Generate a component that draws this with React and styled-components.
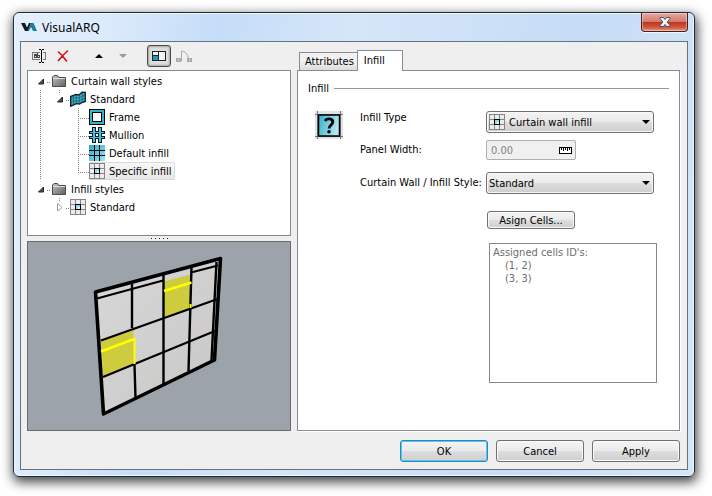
import React from "react";
import styled, { createGlobalStyle, css } from "styled-components";

const ui = `11px "DejaVu Sans Condensed", "DejaVu Sans", sans-serif`;

const GlobalStyle = createGlobalStyle`
  *, *::before, *::after { box-sizing: border-box; }
  body { margin: 0; background: #fff; font: ${ui}; color: #000; }
  button, input, select { font: inherit; color: inherit; margin: 0; }
  ul { list-style: none; margin: 0; padding: 0; }
  svg { display: block; flex: none; }
`;

const Page = styled.div`
  display: flow-root;
  padding: 12px 17px 19px 13px;
`;

const Dialog = styled.section`
  padding: 0 6px 6px;
  border: 1px solid #1f2b38;
  border-radius: 6px;
  background: linear-gradient(100deg, #e4effb 0, #dcebfb 12%, #c5ddf8 27%, #d5e6f8 45%, #c6dcf6 75%, #d4e6f8 100%);
  box-shadow: inset 0 0 0 1px #eef6fe, 1px 4px 12px 1px rgba(0, 0, 0, 0.75);
`;

const TitleBar = styled.header`
  display: flex;
  align-items: flex-start;
  height: 28px;
`;

const Title = styled.h1`
  display: flex;
  align-items: center;
  gap: 5px;
  flex: 1;
  height: 28px;
  margin: 0;
  padding-left: 1px;
  font: 12px "Noto Sans", sans-serif;
`;

const CloseButton = styled.button`
  display: grid;
  place-items: center;
  width: 47px;
  height: 19px;
  padding: 0;
  border: 1px solid #4d1a1a;
  border-top: 0;
  border-radius: 0 0 4px 4px;
  background: linear-gradient(#e6aaa0 0, #d6786c 48%, #bd3520 52%, #cf5a41 80%, #e09a80 100%);
  box-shadow: inset 0 0 0 1px rgba(255, 255, 255, 0.4), 0 1px 0 #f3f8fe;
`;

const Client = styled.div`
  padding: 0 7px 7px 6px;
  border: 1px solid #68727f;
  background: #efefef;
`;

const Columns = styled.main`
  display: grid;
  grid-template-columns: minmax(0, 264fr) minmax(0, 383fr);
  gap: 6px;
`;

const Column = styled.div`
  display: flex;
  flex-direction: column;
  min-width: 0;
`;

const Toolbar = styled.div`
  display: flex;
  align-items: center;
  height: 28px;
`;

const ToolButton = styled.button`
  display: grid;
  place-items: center;
  width: 24px;
  height: 22px;
  padding: 0;
  border: 1px solid transparent;
  border-radius: 3px;
  background: none;
  ${(p) => p.$pressed && css`
    border-color: #4b4b4b;
    background: #dedede;
    box-shadow: inset 0 0 2px 1px #a5a5a5;
  `}
`;

const ToolGap = styled.span`
  width: 12px;
`;

const Tree = styled.ul`
  height: 166px;
  padding: 1px 4px;
  overflow: hidden;
  border: 1px solid #828790;
  background: #fff;
`;

const Row = styled.div`
  display: flex;
  align-items: center;
  height: 18px;
`;

const dotsV = "repeating-linear-gradient(#808080 0 1px, transparent 1px 2px)";
const dotsH = "repeating-linear-gradient(90deg, #808080 0 1px, transparent 1px 2px)";
const guides = {
  none: "none",
  line: `${dotsV} 8px 0 / 1px 18px no-repeat`,
  tee: `${dotsV} 8px 0 / 1px 18px no-repeat, ${dotsH} 8px 10px / 11px 1px no-repeat`,
  end: `${dotsV} 8px 0 / 1px 10px no-repeat, ${dotsH} 8px 10px / 11px 1px no-repeat`,
  stub: `${dotsH} 15px 10px / 4px 1px no-repeat`,
  drop: `${dotsV} 8px 0 / 1px 3px no-repeat, ${dotsH} 15px 10px / 4px 1px no-repeat`,
};

const Guide = styled.span`
  display: flex;
  align-items: center;
  justify-content: center;
  flex: none;
  width: 19px;
  height: 18px;
  background: ${(p) => guides[p.$kind]};
`;

const Item = styled.span`
  display: flex;
  align-items: center;
  height: 18px;
  gap: 4px;
  padding-right: 4px;
  white-space: nowrap;
  border-radius: 2px;
  ${(p) => p.$selected && css`
    background: linear-gradient(#f9f9f9, #e6e6e6);
    box-shadow: inset 0 0 0 1px #d9d9d9;
  `}
`;

const Splitter = styled.div`
  display: flex;
  justify-content: center;
  gap: 3px;
  height: 5px;
  padding-top: 2px;
`;

const Grip = styled.span`
  width: 1px;
  height: 1px;
  background: #222;
`;

const Preview = styled.div`
  display: flex;
  justify-content: center;
  height: 190px;
  border: 1px solid #6b6b6b;
  background: #9ca3ab;
`;

const Tabs = styled.div`
  display: flex;
  align-items: flex-end;
  height: 28px;
  padding-left: 2px;
`;

const Tab = styled.button`
  height: ${(p) => (p.$active ? 21 : 18)}px;
  padding: ${(p) => (p.$active ? "0 17px 2px 6px" : "0 3px 0 5px")};
  border: 1px solid #898c95;
  border-bottom: 0;
  border-right-width: ${(p) => (p.$active ? 1 : 0)}px;
  background: ${(p) => (p.$active ? "#fff" : "linear-gradient(#f2f2f2 45%, #dcdcdc)")};
  margin-bottom: ${(p) => (p.$active ? -1 : 0)}px;
  z-index: ${(p) => (p.$active ? 1 : 0)};
`;

const Panel = styled.div`
  flex: 1;
  padding: 9px 10px 0;
  border: 1px solid #898c95;
  background: #fff;
  box-shadow: 1px 1px 0 #fff;
`;

const GroupTitle = styled.h2`
  display: flex;
  align-items: center;
  gap: 5px;
  height: 16px;
  margin: 0 0 14px;
  font: inherit;
  &::after {
    content: "";
    flex: 1;
    height: 1px;
    background: #999;
  }
`;

const Form = styled.form`
  display: grid;
  grid-template-columns: 45px 126px minmax(0, 1fr);
  grid-template-rows: 24px 32px 34px;
  align-items: center;
  padding: 0 15px 0 7px;
`;

const FormIcon = styled.div`
  grid-row: 1 / 4;
  align-self: start;
  padding-top: 1px;
`;

const Label = styled.label`
  grid-column: 2;
  align-self: ${(p) => (p.$top ? "start" : "center")};
  line-height: 16px;
  white-space: nowrap;
`;

const Combo = styled.div`
  display: grid;
  align-items: center;
  grid-template-columns: 3px 16px 1fr 8px 4px;
  height: 22px;
  > select, > svg { grid-row: 1; }
  > svg { z-index: 1; pointer-events: none; }
  > svg:nth-of-type(1) { grid-column: 2; }
  > svg:last-child { grid-column: 4; }
`;

const face = "linear-gradient(#f3f3f3 0, #ebebeb 48%, #dddddd 52%, #cfcfcf 100%)";

const Select = styled.select`
  grid-column: 1 / -1;
  width: 100%;
  height: 22px;
  padding: 0 20px 0 ${(p) => (p.$icon ? 22 : 2)}px;
  appearance: none;
  border: 1px solid #707070;
  border-radius: 3px;
  background: ${face};
  box-shadow: inset 0 0 0 1px #f8f8f8;
`;

const Measure = styled.div`
  display: flex;
  align-items: center;
  width: 90px;
  height: 20px;
  padding: 0 3px 0 4px;
  border: 1px solid #b0b0b0;
  border-radius: 2px;
  background: #f0f0f0;
  color: #838383;
`;

const MeasureInput = styled.input`
  flex: 1;
  min-width: 0;
  padding: 0;
  border: 0;
  background: none;
`;

const Button = styled.button`
  width: 88px;
  height: ${(p) => (p.$small ? 18 : 22)}px;
  padding: 0;
  border: 1px solid ${(p) => (p.$primary ? "#3c7fb1" : "#707070")};
  border-radius: 3px;
  background: ${face};
  box-shadow: inset 0 0 0 1px ${(p) => (p.$primary ? "#45d0fa" : "#fafafa")};
`;

const Assigned = styled.div`
  grid-column: 3;
  display: flex;
  flex-direction: column;
  gap: 14px;
  padding-top: 11px;
  margin: 0 -3px 0 1px;
`;

const CellList = styled.div`
  height: 140px;
  margin-left: 2px;
  padding: 2px 3px;
  border: 1px solid #828790;
  color: #6d6d6d;
  line-height: 13px;
`;

const CellItems = styled.ul`
  && { padding-left: 12px; }
`;

const Actions = styled.footer`
  display: flex;
  justify-content: flex-end;
  gap: 8px;
  padding-top: 9px;
`;

const Logo = () => (
  <svg width="16" height="16" viewBox="0 0 16 16">
    <path d="M0 4h4l2 4.500L8 4h2L7 12H4z" fill="#101820" />
    <path d="M10 4h2.500L16 12h-4l-2-4-2 4H6.500z" fill="#16809b" />
  </svg>
);

const Cross = () => (
  <svg width="12" height="10" viewBox="0 0 12 10">
    <path d="M1 .5h3.500L6 2.500 7.500.5H11v1L8.200 5 11 8.500v1H7.500L6 7.500l-1.500 2H1v-1L3.800 5 1 1.500z" fill="#f4f4f4" stroke="#4b4f63" />
  </svg>
);

const RenameIcon = () => (
  <svg width="16" height="16" viewBox="0 0 16 16" fill="none" stroke="#444" shapeRendering="crispEdges">
    <path d="M9 4.500H1.500v7H9M12 4.500h2.500v7H12" stroke="#777" />
    <path d="M3 6.500h2v3H3v-2h2M6.500 5v5M7 7.500h1.500v2H7" />
    <path d="M8 1.500h2M11 1.500h2M10.500 2v12M8 14.500h2M11 14.500h2" stroke="#000" />
  </svg>
);

const DeleteIcon = () => (
  <svg width="12" height="12" viewBox="0 0 12 12">
    <path d="M1.500 2C4 4 7 7.500 9.500 11M10.500 1C7 4 4 7 1.500 10.500" stroke="#d01010" strokeWidth="1.600" fill="none" strokeLinecap="round" />
  </svg>
);

const Arrow = ({ down, color = "#000" }) => (
  <svg width="8" height="4" viewBox="0 0 8 4">
    <path d={down ? "M0 0h8L4 4z" : "M0 4h8L4 0z"} fill={color} />
  </svg>
);

const LayoutIcon = () => (
  <svg width="14" height="10" viewBox="0 0 14 10" shapeRendering="crispEdges">
    <path d="M.5.5h13v9H.5z" fill="#f4f4f4" stroke="#222" />
    <path d="M1 5h5v4H1z" fill="#18a0c4" />
    <path d="M6.500 1v8M1 4.500h5" stroke="#222" />
  </svg>
);

const PathIcon = () => (
  <svg width="18" height="13" viewBox="-2 0 18 13" fill="none" stroke="#aaa">
    <path d="M5.500 11.500v-11M5.500 1.500C9 1 12 4 12.500 9" />
    <path d="M0 8h5v4H0zM11 8h5v4h-5z" fill="#aaa" stroke="none" />
    <path d="M2 10h1M13 10h1" stroke="#fff" />
  </svg>
);

const Expander = ({ open }) => (
  <svg width="7" height="8" viewBox="0 0 7 8">
    {open ? <path d="M5.500 2v5h-5z" fill="#555" stroke="#222" /> : <path d="M.5.5v8L5 4.500z" fill="#fff" stroke="#999" />}
  </svg>
);

const FolderIcon = () => (
  <svg width="16" height="16" viewBox="0 0 16 16">
    <defs>
      <linearGradient id="folder" x2="1" y2="1">
        <stop stopColor="#c4c4c4" />
        <stop offset="1" stopColor="#606060" />
      </linearGradient>
    </defs>
    <path d="M1.500 13.500v-9.500L3 2.500h3.500L8 4.500h6.500v9z" fill="url(#folder)" stroke="#4c4c4c" />
    <path d="M2 5.500h12" stroke="#ddd" />
  </svg>
);

const WallIcon = () => (
  <svg width="16" height="16" viewBox="0 0 16 16">
    <path d="M.7 5.500 6 3.500l3 .5 3-2.800 3.300.3v9L12 11.500 9.500 13l-3-.5L.7 15.200z" fill="#3fb0c6" stroke="#12262c" strokeWidth="1.400" />
    <path d="M3.500 4.500v9M6.300 4v8.500M9.300 4v8.500M12.300 2v9.500M1 8.500l5-2 3.300.5L12 5l3-.5M1 11.500l5-2 3.300.5L12 8l3-.5" stroke="#185663" strokeWidth=".7" fill="none" />
  </svg>
);

const FrameIcon = () => (
  <svg width="16" height="16" viewBox="0 0 16 16" shapeRendering="crispEdges">
    <path d="M.5.5h15v15H.5z" fill="#35b4d0" stroke="#000" />
    <path d="M3.500 3.500h9v9h-9z" fill="#fff" stroke="#000" />
  </svg>
);

const MullionIcon = () => (
  <svg width="16" height="16" viewBox="0 0 16 16" shapeRendering="crispEdges">
    <path d="M3 0h4v16H3zM9 0h4v16H9zM0 4h16v3H0zM0 9h16v3H0z" fill="#0b1a1e" />
    <path d="M4 1h2v14H4zM10 1h2v14h-2zM1 5h14v1H1zM1 10h14v1H1z" fill="#4cc0d8" />
    <path d="M7 7h2v2H7z" fill="#fff" />
  </svg>
);

const GridIcon = () => (
  <svg width="16" height="16" viewBox="0 0 16 16" shapeRendering="crispEdges">
    <defs>
      <linearGradient id="pane" x2="1" y2="1">
        <stop stopColor="#27a8cc" />
        <stop offset="1" stopColor="#a5e6f2" />
      </linearGradient>
    </defs>
    <path d="M0 0h16v16H0z" fill="url(#pane)" />
    <path d="M5.500 0v16M10.500 0v16M0 5.500h16M0 10.500h16" stroke="#000" />
  </svg>
);

const CellIcon = () => (
  <svg width="16" height="16" viewBox="0 0 16 16" shapeRendering="crispEdges">
    <path d="M.5.5h15v15H.5z" fill="#ececec" stroke="#858585" />
    <path d="M5.500 0v16M10.500 0v16M0 5.500h16M0 10.500h16" stroke="#858585" />
    <path d="M5.500 5.500h5v5h-5z" fill="#8bdcec" stroke="#000" />
    <path d="M8 8h2v2H8z" fill="#d8f5fa" />
  </svg>
);

const InfillIcon = () => (
  <svg width="28" height="28" viewBox="0 0 28 28">
    <defs>
      <linearGradient id="glass" x2="1" y2="0.300">
        <stop stopColor="#32aecb" />
        <stop offset="1" stopColor="#b4e9f3" />
      </linearGradient>
    </defs>
    <path d="M0 0h28v28H0z" fill="#e2e2e2" />
    <path d="M2.500 0v28M25.500 0v28M0 3.500h28M0 25.500h28" stroke="#777" />
    <path d="M3.500 4h21v21h-21z" fill="url(#glass)" stroke="#000" strokeWidth="1.500" />
    <path d="M10 10c1.500-3 7.800-3 7.800 1 0 3-3.800 3-3.800 6.500" fill="none" stroke="#000" strokeWidth="2.800" />
    <circle cx="14" cy="20.800" r="1.800" />
  </svg>
);

const RulerIcon = () => (
  <svg width="13" height="7" viewBox="0 0 13 7" shapeRendering="crispEdges">
    <path d="M.5.5h12v6H.5z" fill="#fff" stroke="#000" />
    <path d="M2.500 1v2M4.500 1v3M6.500 1v2M8.500 1v3M10.500 1v2" stroke="#000" />
  </svg>
);

const WallDrawing = () => (
  <svg width="262" height="188" viewBox="28 242 262 188" role="img" aria-label="Curtain wall preview">
    <defs>
      <linearGradient id="wall" x2="1" y2="1">
        <stop stopColor="#d9d8d8" />
        <stop offset="1" stopColor="#c8c7c6" />
      </linearGradient>
    </defs>
    <path d="M95 292 220 258 214.500 360 103.500 414z" fill="url(#wall)" />
    <path d="M163.500 281.500 191 274.500V308L164 317z" fill="#cdcb3e" />
    <path d="M101 340.500 133.500 330 134.500 365 103 376.500z" fill="#cdcb3e" />
    <g stroke="#000" fill="none">
      <path d="M95.500 292 220.500 258.500 214.500 360 103.500 414z" strokeWidth="3.600" strokeLinejoin="round" />
      <path d="M97 298.500 163 280.500M191 272.500 218 265.500M101 340.500 219 298.500M103 377 215 331" strokeWidth="2.200" />
      <path d="M132 284V328M134.500 365 135.500 398M163.500 274V384M191.500 267 188.500 371M216.500 262 211.500 360" strokeWidth="2.400" />
    </g>
    <path d="M101 351.500 134 339M164 291 191.500 282.500" stroke="#ff0" strokeWidth="2.600" />
    <path d="M134.500 338V364M190.500 304v4" stroke="#ff0" strokeWidth="2" />
  </svg>
);

const rows = [
  { label: "Curtain wall styles", level: 1, open: true, guides: ["stub"], icon: FolderIcon },
  { label: "Standard", level: 2, open: true, guides: ["line", "drop"], icon: WallIcon },
  { label: "Frame", level: 3, guides: ["line", "none", "tee"], icon: FrameIcon },
  { label: "Mullion", level: 3, guides: ["line", "none", "tee"], icon: MullionIcon },
  { label: "Default infill", level: 3, guides: ["line", "none", "tee"], icon: GridIcon },
  { label: "Specific infill", level: 3, guides: ["line", "none", "end"], icon: CellIcon, selected: true },
  { label: "Infill styles", level: 1, open: true, guides: ["stub"], icon: FolderIcon },
  { label: "Standard", level: 2, open: false, guides: ["none", "drop"], icon: CellIcon },
];

const TreeRow = ({ row }) => {
  const Icon = row.icon;
  return (
    <li role="treeitem" aria-level={row.level} aria-expanded={row.open} aria-selected={!!row.selected}>
      <Row>
        {row.guides.map((kind, i) => (
          <Guide key={i} $kind={kind}>
            {i === row.guides.length - 1 && row.open !== undefined && <Expander open={row.open} />}
          </Guide>
        ))}
        <Item $selected={row.selected}>
          <Icon />
          {row.label}
        </Item>
      </Row>
    </li>
  );
};

export default function App() {
  return (
    <Page>
      <GlobalStyle />
      <Dialog aria-labelledby="title">
        <TitleBar>
          <Title id="title"><Logo />VisualARQ</Title>
          <CloseButton aria-label="Close"><Cross /></CloseButton>
        </TitleBar>
        <Client>
          <Columns>
            <Column>
              <Toolbar role="toolbar">
                <ToolButton aria-label="Rename"><RenameIcon /></ToolButton>
                <ToolButton aria-label="Delete"><DeleteIcon /></ToolButton>
                <ToolGap />
                <ToolButton aria-label="Move up"><Arrow /></ToolButton>
                <ToolButton aria-label="Move down" disabled><Arrow down color="#999" /></ToolButton>
                <ToolGap />
                <ToolButton aria-label="Preview" aria-pressed="true" $pressed><LayoutIcon /></ToolButton>
                <ToolButton aria-label="Edit path" disabled><PathIcon /></ToolButton>
              </Toolbar>
              <Tree role="tree" aria-label="Styles">
                {rows.map((row, i) => <TreeRow key={i} row={row} />)}
              </Tree>
              <Splitter role="separator"><Grip /><Grip /><Grip /><Grip /><Grip /></Splitter>
              <Preview><WallDrawing /></Preview>
            </Column>
            <Column>
              <Tabs role="tablist">
                <Tab role="tab" aria-selected="false">Attributes</Tab>
                <Tab role="tab" aria-selected="true" $active>Infill</Tab>
              </Tabs>
              <Panel role="tabpanel">
                <GroupTitle>Infill</GroupTitle>
                <Form onSubmit={(e) => e.preventDefault()}>
                  <FormIcon><InfillIcon /></FormIcon>
                  <Label htmlFor="type" $top>Infill Type</Label>
                  <Combo>
                    <Select id="type" $icon><option>Curtain wall infill</option></Select>
                    <CellIcon />
                    <Arrow down />
                  </Combo>
                  <Label htmlFor="width">Panel Width:</Label>
                  <Measure>
                    <MeasureInput id="width" defaultValue="0.00" disabled />
                    <RulerIcon />
                  </Measure>
                  <Label htmlFor="style">Curtain Wall / Infill Style:</Label>
                  <Combo>
                    <Select id="style"><option>Standard</option></Select>
                    <Arrow down />
                  </Combo>
                  <Assigned>
                    <Button type="button" $small>Asign Cells...</Button>
                    <CellList>
                      Assigned cells ID's:
                      <CellItems><li>(1, 2)</li><li>(3, 3)</li></CellItems>
                    </CellList>
                  </Assigned>
                </Form>
              </Panel>
            </Column>
          </Columns>
          <Actions>
            <Button $primary>OK</Button>
            <Button>Cancel</Button>
            <Button>Apply</Button>
          </Actions>
        </Client>
      </Dialog>
    </Page>
  );
}
